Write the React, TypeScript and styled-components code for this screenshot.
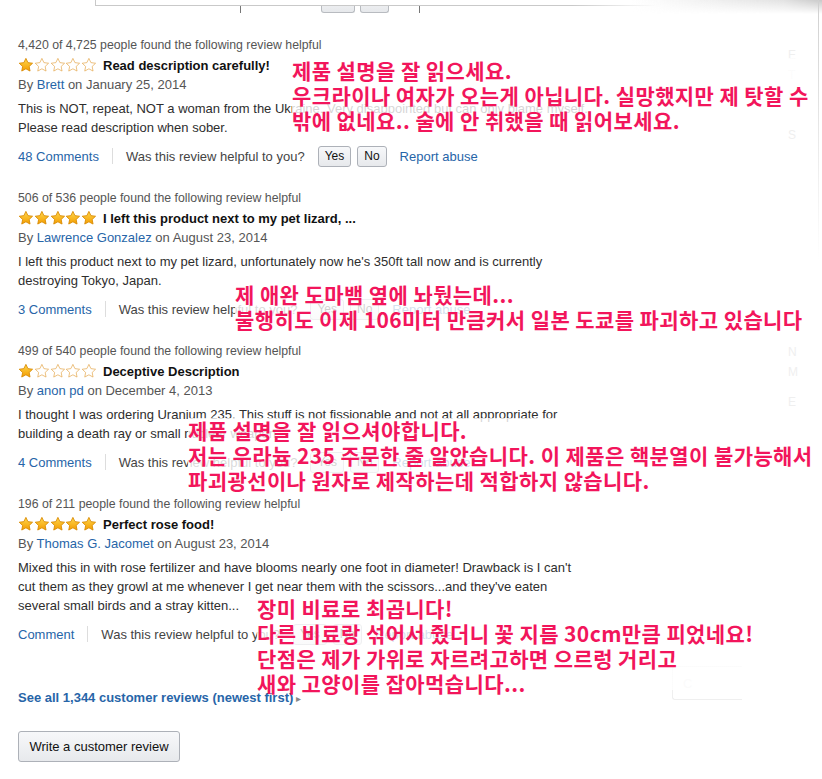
import React from "react";
import styled, { createGlobalStyle } from "styled-components";

const GlobalStyle = createGlobalStyle`
  html, body {
    margin: 0;
    padding: 0;
    background: #fff;
  }
  body {
    font-family: "Liberation Sans", Arial, sans-serif;
    color: #333;
  }
`;

const LINK = "#2765a8";

type ReviewData = {
  helpful: string;
  rating: number;
  title: string;
  author: string;
  date: string;
  body: string[];
  comments: string;
};

type NoteData = {
  top: number;
  left: number;
  lines: string[];
};

const reviews: ReviewData[] = [
  {
    helpful: "4,420 of 4,725",
    rating: 1,
    title: "Read description carefully!",
    author: "Brett",
    date: "January 25, 2014",
    body: [
      "This is NOT, repeat, NOT a woman from the Ukraine. Very disappointed but can only blame myself.",
      "Please read description when sober.",
    ],
    comments: "48 Comments",
  },
  {
    helpful: "506 of 536",
    rating: 5,
    title: "I left this product next to my pet lizard, ...",
    author: "Lawrence Gonzalez",
    date: "August 23, 2014",
    body: [
      "I left this product next to my pet lizard, unfortunately now he's 350ft tall now and is currently",
      "destroying Tokyo, Japan.",
    ],
    comments: "3 Comments",
  },
  {
    helpful: "499 of 540",
    rating: 1,
    title: "Deceptive Description",
    author: "anon pd",
    date: "December 4, 2013",
    body: [
      "I thought I was ordering Uranium 235. This stuff is not fissionable and not at all appropriate for",
      "building a death ray or small nuclear weapon.",
    ],
    comments: "4 Comments",
  },
  {
    helpful: "196 of 211",
    rating: 5,
    title: "Perfect rose food!",
    author: "Thomas G. Jacomet",
    date: "August 23, 2014",
    body: [
      "Mixed this in with rose fertilizer and have blooms nearly one foot in diameter! Drawback is I can't",
      "cut them as they growl at me whenever I get near them with the scissors...and they've eaten",
      "several small birds and a stray kitten...",
    ],
    comments: "Comment",
  },
];

const notes: NoteData[] = [
  {
    top: 58,
    left: 292,
    lines: [
      "제품 설명을 잘 읽으세요.",
      "우크라이나 여자가 오는게 아닙니다. 실망했지만 제 탓할 수",
      "밖에 없네요.. 술에 안 취했을 때 읽어보세요.",
    ],
  },
  {
    top: 282,
    left: 235,
    lines: [
      "제 애완 도마뱀 옆에 놔뒀는데...",
      "불행히도 이제 106미터 만큼커서 일본 도쿄를 파괴하고 있습니다",
    ],
  },
  {
    top: 418,
    left: 188,
    lines: [
      "제품 설명을 잘 읽으셔야합니다.",
      "저는 우라늄 235 주문한 줄 알았습니다. 이 제품은 핵분열이 불가능해서",
      "파괴광선이나 원자로 제작하는데 적합하지 않습니다.",
    ],
  },
  {
    top: 596,
    left: 257,
    lines: [
      "장미 비료로 최곱니다!",
      "다른 비료랑 섞어서 줬더니 꽃 지름 30cm만큼 피었네요!",
      "단점은 제가 가위로 자르려고하면 으르렁 거리고",
      "새와 고양이를 잡아먹습니다...",
    ],
  },
];

const sideLetters = [
  { top: 48, ch: "E" },
  { top: 68, ch: "T" },
  { top: 88, ch: "S" },
  { top: 128, ch: "S" },
  { top: 345, ch: "N" },
  { top: 365, ch: "M" },
  { top: 395, ch: "E" },
];

const Page = styled.div`
  position: relative;
  width: 822px;
  height: 779px;
  overflow: hidden;
  box-sizing: border-box;
  padding: 0 18px;
`;

const TopRow = styled.div`
  display: flex;
  align-items: flex-end;
  height: 13px;
  overflow: hidden;
`;

const Tick = styled.span<{ $gap: number }>`
  width: 1px;
  height: 8px;
  margin-left: ${(p) => p.$gap}px;
  background: #777;
`;

const MiniButton = styled.span<{ $gap: number; $width: number }>`
  width: ${(p) => p.$width}px;
  height: 13px;
  margin-left: ${(p) => p.$gap}px;
  box-sizing: border-box;
  border: 1px solid #b8bbc0;
  border-top: none;
  border-radius: 0 0 3px 3px;
  background: linear-gradient(#f2f3f5, #e6e8eb);
`;

const FindBox = styled.div`
  position: absolute;
  top: -20px;
  left: 95px;
  width: 560px;
  height: 24px;
  border: 1px solid #c9c9c9;
  border-right: none;
  background: #fff;
  box-shadow: 0 1px 2px rgba(0, 0, 0, 0.12);
  -webkit-mask-image: linear-gradient(to right, #000 85%, transparent);
  mask-image: linear-gradient(to right, #000 85%, transparent);
`;

const CornerShade = styled.div`
  position: absolute;
  top: 0;
  right: 0;
  width: 190px;
  height: 14px;
  background: linear-gradient(to right, rgba(255, 255, 255, 0), #e2e2e2 80%, #c8c8c8);
  -webkit-mask-image: linear-gradient(#000, transparent);
  mask-image: linear-gradient(#000, transparent);
`;

const RightEdge = styled.div`
  position: absolute;
  top: 0;
  right: 3px;
  width: 1px;
  height: 260px;
  background: linear-gradient(#d0d0d0, rgba(255, 255, 255, 0));
`;

const SideLetter = styled.span<{ $top: number }>`
  position: absolute;
  top: ${(p) => p.$top}px;
  left: 788px;
  font-size: 12px;
  color: #efefef;
`;

const SideBox = styled.div`
  position: absolute;
  top: 666px;
  left: 672px;
  width: 70px;
  height: 34px;
  border: 1px solid #efefef;
  border-right: none;
  border-radius: 3px 0 0 3px;
  color: #eaeaea;
  font-size: 13px;
  display: flex;
  align-items: center;
  padding-left: 10px;
  box-sizing: border-box;
`;

const ReviewList = styled.div`
  padding-top: 22px;
`;

const ReviewBlock = styled.div`
  margin-bottom: 21px;
`;

const HelpfulLine = styled.div`
  font-size: 12.3px;
  line-height: 20px;
  color: #555;
`;

const TitleRow = styled.div`
  display: flex;
  align-items: center;
  gap: 6px;
  height: 20px;
`;

const Stars = styled.div`
  display: flex;
  width: 79px;
`;

const ReviewTitle = styled.span`
  font-size: 13px;
  font-weight: bold;
  color: #111;
`;

const Byline = styled.div`
  font-size: 13px;
  line-height: 20px;
  color: #555;
`;

const Link = styled.a<{ $bold?: boolean }>`
  color: ${LINK};
  text-decoration: none;
  font-weight: ${(p) => (p.$bold ? "bold" : "normal")};
`;

const Body = styled.div`
  margin-top: 4px;
  font-size: 13px;
  line-height: 19px;
  color: #2e2e2e;
  white-space: nowrap;
`;

const Actions = styled.div`
  margin-top: 8px;
  display: flex;
  align-items: center;
  height: 22px;
  font-size: 13px;
  color: #444;
`;

const Divider = styled.span`
  width: 1px;
  height: 16px;
  margin: 0 13px 0 13px;
  background: #ddd;
`;

const VoteButton = styled.button`
  height: 21px;
  padding: 0 6px;
  margin-left: 6px;
  border: 1px solid #adb1b8;
  border-radius: 3px;
  background: linear-gradient(#f7f8fa, #e7e9ec);
  font-family: "Liberation Sans", Arial, sans-serif;
  font-size: 12px;
  color: #111;
  &:first-of-type {
    margin-left: 13px;
  }
`;

const Report = styled(Link)`
  margin-left: 13px;
`;

const SeeAll = styled.div`
  margin-top: 43px;
  font-size: 13px;
  line-height: 20px;
`;

const Caret = styled.span`
  font-size: 10px;
  color: #888;
  margin-left: 3px;
`;

const WriteButton = styled.button`
  margin-top: 22px;
  width: 162px;
  height: 31px;
  border: 1px solid #adb1b8;
  border-radius: 3px;
  background: linear-gradient(#f7f8fa, #e7e9ec);
  font-family: "Liberation Sans", Arial, sans-serif;
  font-size: 13px;
  color: #111;
`;

const Note = styled.div<{ $top: number; $left: number }>`
  position: absolute;
  top: ${(p) => p.$top}px;
  left: ${(p) => p.$left}px;
  background: linear-gradient(rgba(255, 255, 255, 0.8), rgba(255, 255, 255, 0.8)) top left / 100%
    calc(100% - 6px) no-repeat;
  font-family: "Noto Sans CJK KR", "Noto Sans", sans-serif;
  font-weight: 700;
  font-size: 21px;
  line-height: 25px;
  letter-spacing: 0.4px;
  color: #f2155b;
  white-space: nowrap;
`;

function Star({ filled }: { filled: boolean }) {
  const id = "starFill";
  return (
    <svg width="16" height="16" viewBox="0 0 16 16">
      <defs>
        <linearGradient id={id} x1="0" y1="0" x2="0" y2="1">
          <stop offset="0" stopColor="#ffd84d" />
          <stop offset="1" stopColor="#f39c00" />
        </linearGradient>
      </defs>
      <path
        d="M8 1.3l2.05 4.3 4.7.62-3.44 3.25.88 4.66L8 11.86l-4.19 2.27.88-4.66L1.25 6.22l4.7-.62z"
        fill={filled ? `url(#${id})` : "#fff"}
        stroke={filled ? "#d98a00" : "#e3a447"}
        strokeWidth={filled ? 0.9 : 0.7}
        strokeLinejoin="round"
      />
    </svg>
  );
}

function Review({ data }: { data: ReviewData }) {
  return (
    <ReviewBlock>
      <HelpfulLine>{data.helpful} people found the following review helpful</HelpfulLine>
      <TitleRow>
        <Stars>
          {[0, 1, 2, 3, 4].map((i) => (
            <Star key={i} filled={i < data.rating} />
          ))}
        </Stars>
        <ReviewTitle>{data.title}</ReviewTitle>
      </TitleRow>
      <Byline>
        By <Link>{data.author}</Link> on {data.date}
      </Byline>
      <Body>
        {data.body.map((line, i) => (
          <div key={i}>{line}</div>
        ))}
      </Body>
      <Actions>
        <Link>{data.comments}</Link>
        <Divider />
        <span>Was this review helpful to you?</span>
        <VoteButton>Yes</VoteButton>
        <VoteButton>No</VoteButton>
        <Report>Report abuse</Report>
      </Actions>
    </ReviewBlock>
  );
}

export default function App() {
  return (
    <>
      <GlobalStyle />
      <Page>
        <TopRow>
          <Tick $gap={222} />
          <MiniButton $gap={80} $width={34} />
          <MiniButton $gap={5} $width={29} />
          <Tick $gap={30} />
        </TopRow>
        <FindBox />
        <CornerShade />
        <RightEdge />

        <ReviewList>
          {reviews.map((r) => (
            <Review key={r.title} data={r} />
          ))}
        </ReviewList>

        <SeeAll>
          <Link $bold>See all 1,344 customer reviews (newest first)</Link>
          <Caret>▸</Caret>
        </SeeAll>
        <WriteButton>Write a customer review</WriteButton>

        {sideLetters.map((s, i) => (
          <SideLetter key={i} $top={s.top}>
            {s.ch}
          </SideLetter>
        ))}
        <SideBox>C</SideBox>

        {notes.map((n, i) => (
          <Note key={i} $top={n.top} $left={n.left}>
            {n.lines.map((line, j) => (
              <div key={j}>{line}</div>
            ))}
          </Note>
        ))}
      </Page>
    </>
  );
}
